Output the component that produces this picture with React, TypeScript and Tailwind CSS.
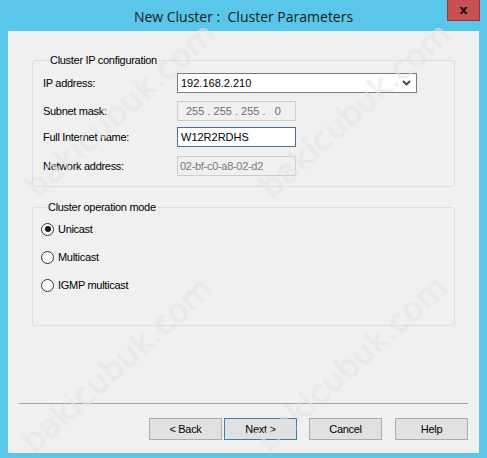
import { FC, ReactNode } from "react";

const ui = "font-['Liberation_Sans',Arial,sans-serif] text-[11px] tracking-[-0.3px]";

interface FieldRowProps {
  label: string;
  className?: string;
  children: ReactNode;
}

const FieldRow: FC<FieldRowProps> = ({ label, className, children }) => (
  <div className={`flex items-center h-[20px] ${className ?? ""}`}>
    <span className="w-[134px] text-black">{label}</span>
    {children}
  </div>
);

const Radio: FC<{ label: string; checked?: boolean; className?: string }> = ({ label, checked, className }) => (
  <div className={`flex items-center h-[20px] gap-[4px] ${className ?? ""}`}>
    <span className="w-[13px] h-[13px] rounded-full border border-[#333] bg-white flex items-center justify-center">
      {checked && <span className="w-[6px] h-[6px] rounded-full bg-[#1a1a1a]" />}
    </span>
    <span className="text-black">{label}</span>
  </div>
);

const WizardButton: FC<{ label: string; primary?: boolean }> = ({ label, primary }) => (
  <button
    className={`w-[73px] h-[22px] bg-[#e1e1e1] border text-black ${primary ? "border-[#3c7fb1]" : "border-[#adadad]"}`}
  >
    {label}
  </button>
);

// faint diagonal site watermark
const Watermark: FC<{ className: string }> = ({ className }) => (
  <div
    className={`absolute pointer-events-none select-none -translate-x-1/2 -translate-y-1/2 -rotate-[42deg] font-['DejaVu_Sans',sans-serif] text-[32px] leading-none whitespace-nowrap text-white/50 [text-shadow:0_0_1px_rgba(0,0,0,0.12)] ${className}`}
  >
    bakicubuk.com
  </div>
);

const App: FC = () => {
  return (
    <div className="relative w-[487px] h-[458px] overflow-hidden bg-[#5ac6e9] flex flex-col">
      {/* Title bar */}
      <div className="h-[31px] grid grid-cols-[1fr_auto_1fr] items-start">
        <div />
        <div className="pt-[6px] font-['Open_Sans',sans-serif] text-[14px] text-[#1b1b1b] whitespace-pre">
          New Cluster :  Cluster Parameters
        </div>
        <div className="flex justify-end pr-[7px]">
          <div className="w-[33px] h-[21px] bg-[#c75050] border border-t-0 border-[#8a3b3b] flex items-center justify-center">
            <span className="font-['DejaVu_Sans',sans-serif] font-bold text-[13px] leading-none text-[#111] -mt-[2px]">x</span>
          </div>
        </div>
      </div>

      {/* Client area */}
      <div className={`mx-[8px] h-[422px] bg-[#f0f0f0] flex flex-col ${ui}`}>
        <div className="px-[24px] pt-[23px]">
          <fieldset className="border border-[#d5dfe5] rounded-[3px] px-[10px] pb-[10px]">
            <legend className="ml-[6px] px-[1px] leading-[13px] text-black">Cluster IP configuration</legend>
            <FieldRow label="IP address:" className="mt-[6px]">
              <div className="w-[240px] h-[20px] bg-white border border-[#7a7a7a] flex items-center justify-between pl-[3px] pr-[5px]">
                <span className="text-black tracking-normal">192.168.2.210</span>
                <svg width="9" height="6" viewBox="0 0 9 6">
                  <path d="M1 1 L4.5 4.5 L8 1" fill="none" stroke="#444" strokeWidth="1.8" />
                </svg>
              </div>
            </FieldRow>
            <FieldRow label="Subnet mask:" className="mt-[8px]">
              <div className="w-[119px] h-[20px] bg-[#f0f0f0] border border-[#cccccc] flex items-center pl-[8px] text-[#6d6d6d] whitespace-pre tracking-normal">
                {"255 . 255 . 255 .   0"}
              </div>
            </FieldRow>
            <FieldRow label="Full Internet name:" className="mt-[6px]">
              <div className="w-[119px] h-[20px] bg-white border border-[#4f6f8f] flex items-center pl-[3px] text-black tracking-normal">
                W12R2RDHS
              </div>
            </FieldRow>
            <FieldRow label="Network address:" className="mt-[9px]">
              <div className="w-[119px] h-[20px] bg-[#f0f0f0] border border-[#cccccc] flex items-center pl-[2px] text-[#7a7a7a]">
                02-bf-c0-a8-02-d2
              </div>
            </FieldRow>
          </fieldset>

          <fieldset className="mt-[14px] border border-[#d5dfe5] rounded-[3px] pl-[8px] pb-[30px]">
            <legend className="ml-[6px] px-[1px] leading-[13px] text-black">Cluster operation mode</legend>
            <Radio label="Unicast" checked className="mt-[5px]" />
            <Radio label="Multicast" className="mt-[8px]" />
            <Radio label="IGMP multicast" className="mt-[8px]" />
          </fieldset>
        </div>

        {/* Footer */}
        <div className="mt-auto px-[11px] pb-[13px]">
          <div className="h-px bg-[#a0a0a0]" />
          <div className="mt-[14px] flex justify-end">
            <WizardButton label="< Back" />
            <div className="ml-[2px]">
              <WizardButton label="Next >" primary />
            </div>
            <div className="ml-[12px]">
              <WizardButton label="Cancel" />
            </div>
            <div className="ml-[13px]">
              <WizardButton label="Help" />
            </div>
          </div>
        </div>
      </div>

      <Watermark className="left-[120px] top-[110px]" />
      <Watermark className="left-[355px] top-[110px]" />
      <Watermark className="left-[117px] top-[365px]" />
      <Watermark className="left-[352px] top-[363px]" />
    </div>
  );
};

export default App;
